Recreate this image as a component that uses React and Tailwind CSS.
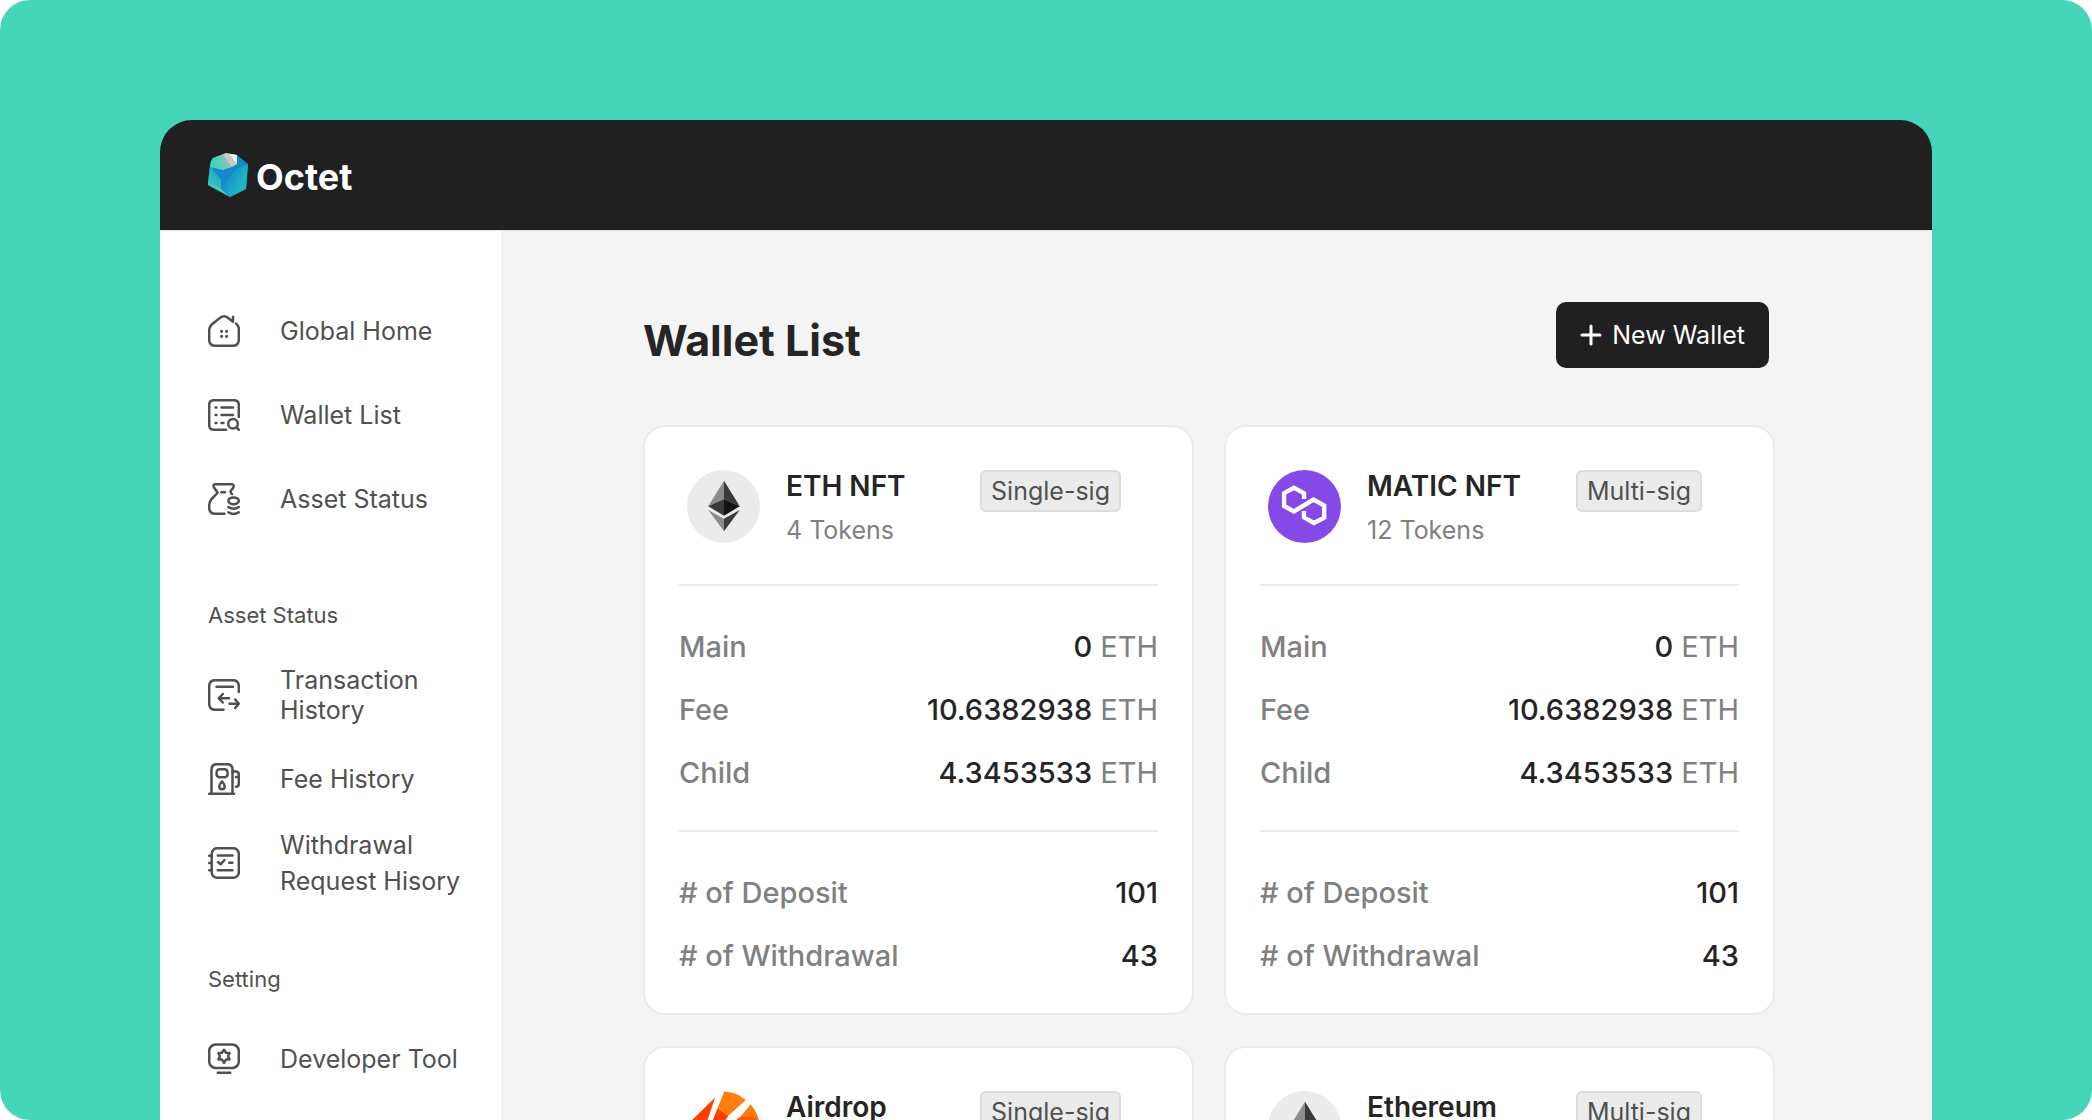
import React from "react";

const OctetLogo = () => (
  <svg width="40" height="44" viewBox="0 0 40 44" aria-hidden="true">
    <defs>
      <linearGradient id="octetTop" x1="0" y1="0.6" x2="1" y2="0.2">
        <stop offset="0.2" stopColor="#43d5b9" />
        <stop offset="1" stopColor="#b5b5b5" />
      </linearGradient>
      <linearGradient id="octetSide" x1="0" y1="0" x2="1" y2="0.6">
        <stop offset="0.3" stopColor="#1589cb" />
        <stop offset="0.8" stopColor="#1cb4c6" />
      </linearGradient>
      <linearGradient id="octetLeft" x1="0" y1="1" x2="0.6" y2="0">
        <stop offset="0" stopColor="#43d5b9" />
        <stop offset="1" stopColor="#1a9fc8" />
      </linearGradient>
    </defs>
    <path d="M5 5 18 0l11 2 11 9-2 25-16 8L0 31 2 11z" fill="#1589cb" />
    <path d="M40 11 38 36 22 44 12 36 27 17z" fill="url(#octetSide)" />
    <path d="M2 13 13 26v11L0 30z" fill="url(#octetLeft)" />
    <path d="M0 30 13 36 22 44 0 32z" fill="#43d5b9" />
    <path d="M5 5 18 0l6 14-9 3-13-3 1-6z" fill="url(#octetTop)" />
    <path d="M15 2 18 0l11 2v9l-5 3z" fill="#c9c9c9" />
    <path d="M21 1 29 2v9z" fill="#f5f0ea" />
  </svg>
);

const NavIcon = ({ children }) => (
  <svg
    className="shrink-0"
    width="32"
    height="32"
    viewBox="0 0 32 32"
    fill="none"
    stroke="currentColor"
    strokeWidth="2.5"
    strokeLinecap="round"
    strokeLinejoin="round"
    aria-hidden="true"
  >
    {children}
  </svg>
);

const HomeIcon = () => (
  <NavIcon>
    <path d="M25 1.8v5L19.5 2.6Q16 0 12.5 2.6L4 9.3Q1.2 11.8 1.2 15.5V24.5Q1.2 30.8 7.5 30.8H24.5Q30.8 30.8 30.8 24.5V14Q30.8 10.5 28 8.5" />
    <path d="M13.6 16.3h.01M18.6 16.3h.01M13.6 21.3h.01M18.6 21.3h.01" strokeWidth="3.2" />
  </NavIcon>
);

const WalletListIcon = () => (
  <NavIcon>
    <path d="M30.8 18V6Q30.8 1.2 26 1.2H6Q1.2 1.2 1.2 6V26Q1.2 30.8 6 30.8H18" />
    <path d="M7.5 8.5h1M13.5 8.5H25M7.5 16h1M13.5 16H25M7.5 24h1M13.5 24H15.5" />
    <circle cx="25" cy="24.8" r="4.8" />
    <path d="m28.6 28.4 2.2 2.4" />
  </NavIcon>
);

const AssetIcon = () => (
  <NavIcon>
    <path d="M9.5 9.5 6 4.5Q4.5 1.2 7.5 1.2H23.5Q26.5 1.2 25.3 4.5L22.5 8.5Q22.5 10 24 11" />
    <path d="M9.5 9.5Q8.5 11.5 6 13.5 1.2 17.5 1.2 23V24.5Q1.2 30.8 7.5 30.8H16.5" />
    <path d="M13.5 9.3H17" />
    <ellipse cx="25.6" cy="17.8" rx="5.2" ry="3.4" />
    <path d="M20.3 24q5.2 3.4 10.5 0M20.3 29.2q5.2 3.4 10.5 0" />
  </NavIcon>
);

const TransactionIcon = () => (
  <NavIcon>
    <path d="M30.8 13V7.5Q30.8 1.2 24.5 1.2H7.5Q1.2 1.2 1.2 7.5V24.5Q1.2 30.8 7.5 30.8H15.5" />
    <path d="M8.5 7.8H25" />
    <path d="M21 19.3H11M14.8 15 10.7 19.3l4.1 4.2" />
    <path d="M21.5 24.8H30.5M27.2 20.5 30.8 24.8 27.2 29" />
  </NavIcon>
);

const FeeIcon = () => (
  <NavIcon>
    <path d="M3.5 30V6.5Q3.5 1.2 9 1.2H19Q24.5 1.2 24.5 6.5V30" />
    <path d="M1.2 30.8H26" />
    <rect x="8.6" y="6.2" width="11" height="8" rx="3" />
    <path d="M14 18.2Q11.3 21.5 11.3 23.5a2.7 2.7 0 0 0 5.4 0Q16.7 21.5 14 18.2z" />
    <path d="M24.5 8.5H28Q30.8 8.5 30.8 12V20.5Q30.8 23.7 28 23.7M28 14H30.8" />
  </NavIcon>
);

const WithdrawalIcon = () => (
  <NavIcon>
    <rect x="3.7" y="1.2" width="27.1" height="29.6" rx="5.5" />
    <path d="M1.2 8.7H3.7M1.2 16H3.7M1.2 23.3H3.7" />
    <path d="M9.8 8.5H24.5M9.8 23.3H24.5M21.2 15.8H24.5" />
    <path d="m10 15 2.7 2.3L16.5 13" />
  </NavIcon>
);

const DeveloperIcon = () => (
  <NavIcon>
    <rect x="1.2" y="1.6" width="29.6" height="23.3" rx="6.5" />
    <path d="M9.8 29.7H22.2" />
    <path d="M16 6.7 18 9.8 21.6 10 20 13.2 21.6 16.4 18 16.6 16 19.7 14 16.6 10.4 16.4 12 13.2 10.4 10 14 9.8z" />
  </NavIcon>
);

const EthLogo = () => (
  <svg className="ml-2 shrink-0" width="73" height="73" viewBox="0 0 74 74" aria-hidden="true">
    <circle cx="37" cy="37" r="37" fill="#ebebeb" />
    <path d="M37.5 11v18.5L21.5 36.7z" fill="#8c8c8c" />
    <path d="M37.5 11v18.5l16 7.2z" fill="#3a3a3a" />
    <path d="M37.5 29.3v17L21.5 36.7z" fill="#3a3a3a" />
    <path d="M37.5 29.3v17l16-9.6z" fill="#141414" />
    <path d="M37.5 49.5V62L21.5 40.5z" fill="#8c8c8c" />
    <path d="M37.5 49.5V62l16-21.5z" fill="#3c3c3b" />
  </svg>
);

const MaticLogo = () => (
  <svg className="ml-2 shrink-0" width="73" height="73" viewBox="0 0 74 74" aria-hidden="true">
    <circle cx="37" cy="37" r="37" fill="#8549e8" />
    <path
      d="M36.5 29.5V23.5L26.3 18 16.3 23.5V36.5L26.3 42 46.2 30 57 36V48.3L46.5 53.7 36.5 48V41.5"
      fill="none"
      stroke="#fff"
      strokeWidth="4.4"
    />
  </svg>
);

const AirdropLogo = () => (
  <svg className="ml-2 shrink-0" width="73" height="73" viewBox="0 0 74 74" aria-hidden="true">
    <path d="M28.5 6.5 0 34.5Q0 50 10 62z" fill="#ff3e00" />
    <path d="M37.7.6Q50 1 59.5 9L42 25 31 17.5z" fill="#ff7e0d" />
    <path d="M31 17.5 42 25 14 66 12 64z" fill="#ff3e00" />
    <path d="M64.5 13.5Q74 25 73.5 38L18 70z" fill="#ff7e0d" />
    <path d="M52 27Q62 24 71 28L73.5 38 18 70z" fill="#fb5b12" />
  </svg>
);

const navSections = [
  {
    title: null,
    items: [
      { label: "Global Home", icon: HomeIcon },
      { label: "Wallet List", icon: WalletListIcon },
      { label: "Asset Status", icon: AssetIcon },
    ],
  },
  {
    title: "Asset Status",
    items: [
      { label: "Transaction History", icon: TransactionIcon, tight: true },
      { label: "Fee History", icon: FeeIcon },
      { label: "Withdrawal Request Hisory", icon: WithdrawalIcon },
    ],
  },
  {
    title: "Setting",
    items: [{ label: "Developer Tool", icon: DeveloperIcon }],
  },
];

const balances = [
  { label: "Main", value: "0", unit: "ETH" },
  { label: "Fee", value: "10.6382938", unit: "ETH" },
  { label: "Child", value: "4.3453533", unit: "ETH" },
];

const counts = [
  { label: "# of Deposit", value: "101" },
  { label: "# of Withdrawal", value: "43" },
];

const wallets = [
  {
    name: "ETH NFT",
    tokens: "4 Tokens",
    type: "Single-sig",
    logo: EthLogo,
    stats: [balances, counts],
  },
  {
    name: "MATIC NFT",
    tokens: "12 Tokens",
    type: "Multi-sig",
    logo: MaticLogo,
    stats: [balances, counts],
  },
  { name: "Airdrop", type: "Single-sig", logo: AirdropLogo, stats: [] },
  { name: "Ethereum", type: "Multi-sig", logo: EthLogo, stats: [] },
];

const Sidebar = () => (
  <nav className="w-[341px] shrink-0 bg-white pt-[58px] pl-12 text-[#4f5150]">
    {navSections.map((section, index) => (
      <div key={index}>
        {section.title && (
          <h2 className="mt-[59px] mb-[23px] text-[22px] leading-[30px]">
            {section.title}
          </h2>
        )}
        <ul>
          {section.items.map(({ label, icon: Icon, tight }) => (
            <li key={label}>
              <a href="#" className="flex h-[84px] items-center gap-10 pr-6">
                <Icon />
                <span
                  className={
                    tight
                      ? "text-[25px] leading-[30px]"
                      : "text-[25px] leading-9"
                  }
                >
                  {label}
                </span>
              </a>
            </li>
          ))}
        </ul>
      </div>
    ))}
  </nav>
);

const StatList = ({ rows }) => (
  <dl className="border-t-2 border-[#ebebeb] pt-[29px] pb-[26px] text-[29px] font-medium">
    {rows.map((row) => (
      <div key={row.label} className="flex h-[63px] items-center justify-between">
        <dt className="text-[#7f8180]">{row.label}</dt>
        <dd className="text-[#252525]">
          {row.value}
          {row.unit && (
            <span className="font-normal text-[#7f8180]"> {row.unit}</span>
          )}
        </dd>
      </div>
    ))}
  </dl>
);

const WalletCard = ({ wallet }) => {
  const Logo = wallet.logo;

  return (
    <article className="rounded-[22px] border-2 border-[#ebebeb] bg-white px-[34px] pt-[43px]">
      <div className="flex h-[114px] items-start">
        <Logo />
        <div className="ml-[26px] flex flex-col gap-3">
          <h2 className="text-[28px] leading-8 font-semibold text-[#252525]">
            {wallet.name}
          </h2>
          {wallet.tokens && (
            <p className="text-[25px] leading-8 text-[#7f8180]">
              {wallet.tokens}
            </p>
          )}
        </div>
        <span className="mr-[37px] ml-auto rounded-md border-2 border-[#dcdcdc] bg-[#ebebeb] px-[9px] text-[25px] leading-[38px] text-[#4f5150]">
          {wallet.type}
        </span>
      </div>
      {wallet.stats.map((rows, index) => (
        <StatList key={index} rows={rows} />
      ))}
    </article>
  );
};

const App = () => {
  return (
    <div className="flex h-screen flex-col overflow-hidden rounded-[30px] bg-[#45d6ba] px-40 pt-30 font-['Inter',sans-serif]">
      <header className="flex h-[110px] shrink-0 items-center gap-2 rounded-t-[32px] bg-[#202020] px-12">
        <OctetLogo />
        <span className="pt-1 text-[36px] font-bold text-white">Octet</span>
      </header>
      <div className="flex min-h-0 grow border-t border-[#e4e4e4] bg-[#f4f4f4]">
        <Sidebar />
        <main className="grow pt-[71px] pr-[157px] pl-[142px]">
          <div className="mb-[45px] flex h-[78px] items-start justify-between">
            <h1 className="text-[43px] leading-[76px] font-bold text-[#252525]">
              Wallet List
            </h1>
            <button className="mr-[6px] flex h-[66px] items-center gap-[10px] rounded-[10px] bg-[#202020] px-6 text-[25px] text-white">
              <svg
                width="22"
                height="22"
                viewBox="0 0 22 22"
                stroke="currentColor"
                strokeWidth="3"
                strokeLinecap="round"
                aria-hidden="true"
              >
                <path d="M11 2v18M2 11h18" />
              </svg>
              <span className="pt-0.5">New Wallet</span>
            </button>
          </div>
          <div className="grid grid-cols-2 gap-x-[30px] gap-y-[31px]">
            {wallets.map((wallet) => (
              <WalletCard key={wallet.name} wallet={wallet} />
            ))}
          </div>
        </main>
      </div>
    </div>
  );
};

export default App;
